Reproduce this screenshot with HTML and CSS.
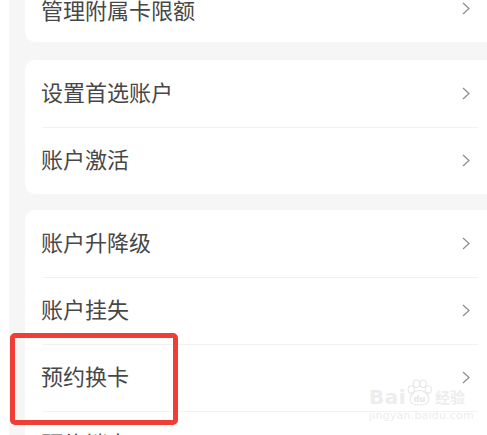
FILE: index.html
```html
<!DOCTYPE html>
<html lang="zh-CN">
<head>
    <meta charset="UTF-8">
    <meta name="viewport" content="width=device-width, initial-scale=1.0">
    <title>账户管理</title>
    <link rel="stylesheet" href="styles.css">
</head>
<body>
    <div class="page">
        <div class="group first">
            <div class="row"><span>管理附属卡限额</span><svg class="arrow" viewBox="0 0 8 13"><polyline points="1,1 7,6.5 1,12"/></svg></div>
        </div>
        <div class="group">
            <div class="row"><span>设置首选账户</span><svg class="arrow" viewBox="0 0 8 13"><polyline points="1,1 7,6.5 1,12"/></svg></div>
            <div class="row"><span>账户激活</span><svg class="arrow" viewBox="0 0 8 13"><polyline points="1,1 7,6.5 1,12"/></svg></div>
        </div>
        <div class="group">
            <div class="row"><span>账户升降级</span><svg class="arrow" viewBox="0 0 8 13"><polyline points="1,1 7,6.5 1,12"/></svg></div>
            <div class="row"><span>账户挂失</span><svg class="arrow" viewBox="0 0 8 13"><polyline points="1,1 7,6.5 1,12"/></svg></div>
            <div class="row"><span>预约换卡</span><svg class="arrow" viewBox="0 0 8 13"><polyline points="1,1 7,6.5 1,12"/></svg></div>
            <div class="row"><span>预约销户</span><svg class="arrow" viewBox="0 0 8 13"><polyline points="1,1 7,6.5 1,12"/></svg></div>
        </div>
    </div>

    <!-- 标注框 -->
    <div class="mark"></div>

    <!-- 水印 -->
    <div class="watermark">
        <div class="wm-top">
            <span class="wm-bai">Bai</span>
            <svg class="wm-paw" viewBox="0 0 26 26">
                <ellipse cx="5" cy="10" rx="3" ry="3.6"/>
                <ellipse cx="10" cy="4.5" rx="3" ry="3.6"/>
                <ellipse cx="16.5" cy="4.5" rx="3" ry="3.6"/>
                <ellipse cx="21.5" cy="10" rx="3" ry="3.6"/>
                <path d="M4 20 C4 14 9 11 13 11 C17 11 22 14 22 20 C22 24 19 25 13 25 C7 25 4 24 4 20 Z"/>
                <text x="13" y="22" text-anchor="middle">du</text>
            </svg>
            <span class="wm-jy">经验</span>
        </div>
        <div class="wm-url">jingyan.baidu.com</div>
    </div>
</body>
</html>
```

FILE: styles.css
```css
html, body {
    margin: 0;
    padding: 0;
    height: 100%;
    overflow: hidden;
    background: #fff;
}
body {
    font-family: "Noto Sans CJK SC", "Noto Sans", sans-serif;
    position: relative;
}
.page {
    margin-left: 9px;
    padding-left: 16px;
    background: #f6f6f6;
    min-height: 100%;
    display: flex;
    flex-direction: column;
    gap: 16px;
}
.group {
    background: #fff;
    border-radius: 10px;
    margin-right: -14px;
}
.group.first {
    margin-top: -25px;
    margin-bottom: 2px;
}
.row {
    height: 67px;
    display: flex;
    align-items: center;
    justify-content: space-between;
    padding: 0 31px 0 16px;
    font-size: 22px;
    color: #474747;
    position: relative;
}
.row span {
    margin-top: -6px;
}
.first .row span {
    margin-top: 0;
}
.row + .row::before {
    content: "";
    position: absolute;
    top: 0;
    left: 18px;
    right: 23px;
    height: 1px;
    background: #f2f2f2;
}
.arrow {
    width: 8px;
    height: 13px;
    fill: none;
    stroke: #8c8c8c;
    stroke-width: 1.2;
}
.mark {
    position: absolute;
    left: 10px;
    top: 333px;
    width: 158px;
    height: 82px;
    border: 5px solid #ee3e36;
    border-radius: 5px;
}
.watermark {
    position: absolute;
    left: 369px;
    top: 379px;
    white-space: nowrap;
    color: #ededed;
    font-family: "DejaVu Sans", sans-serif;
}
.wm-top {
    display: flex;
    align-items: flex-end;
    height: 27px;
}
.wm-bai {
    font-size: 20px;
    font-weight: bold;
    line-height: 18px;
    letter-spacing: 0.5px;
}
.wm-paw {
    width: 27px;
    height: 27px;
    flex: none;
    fill: #fff;
    stroke: #e6e6e6;
    stroke-width: 1;
}
.wm-paw text {
    font-size: 8px;
    font-weight: bold;
    fill: #e6e6e6;
    stroke: none;
}
.wm-jy {
    font-family: "Noto Sans CJK SC", sans-serif;
    font-size: 15px;
    font-weight: bold;
    line-height: 18px;
    margin-left: 2px;
}
.wm-url {
    font-size: 11px;
    margin-top: 3px;
    letter-spacing: 0.2px;
}
```
